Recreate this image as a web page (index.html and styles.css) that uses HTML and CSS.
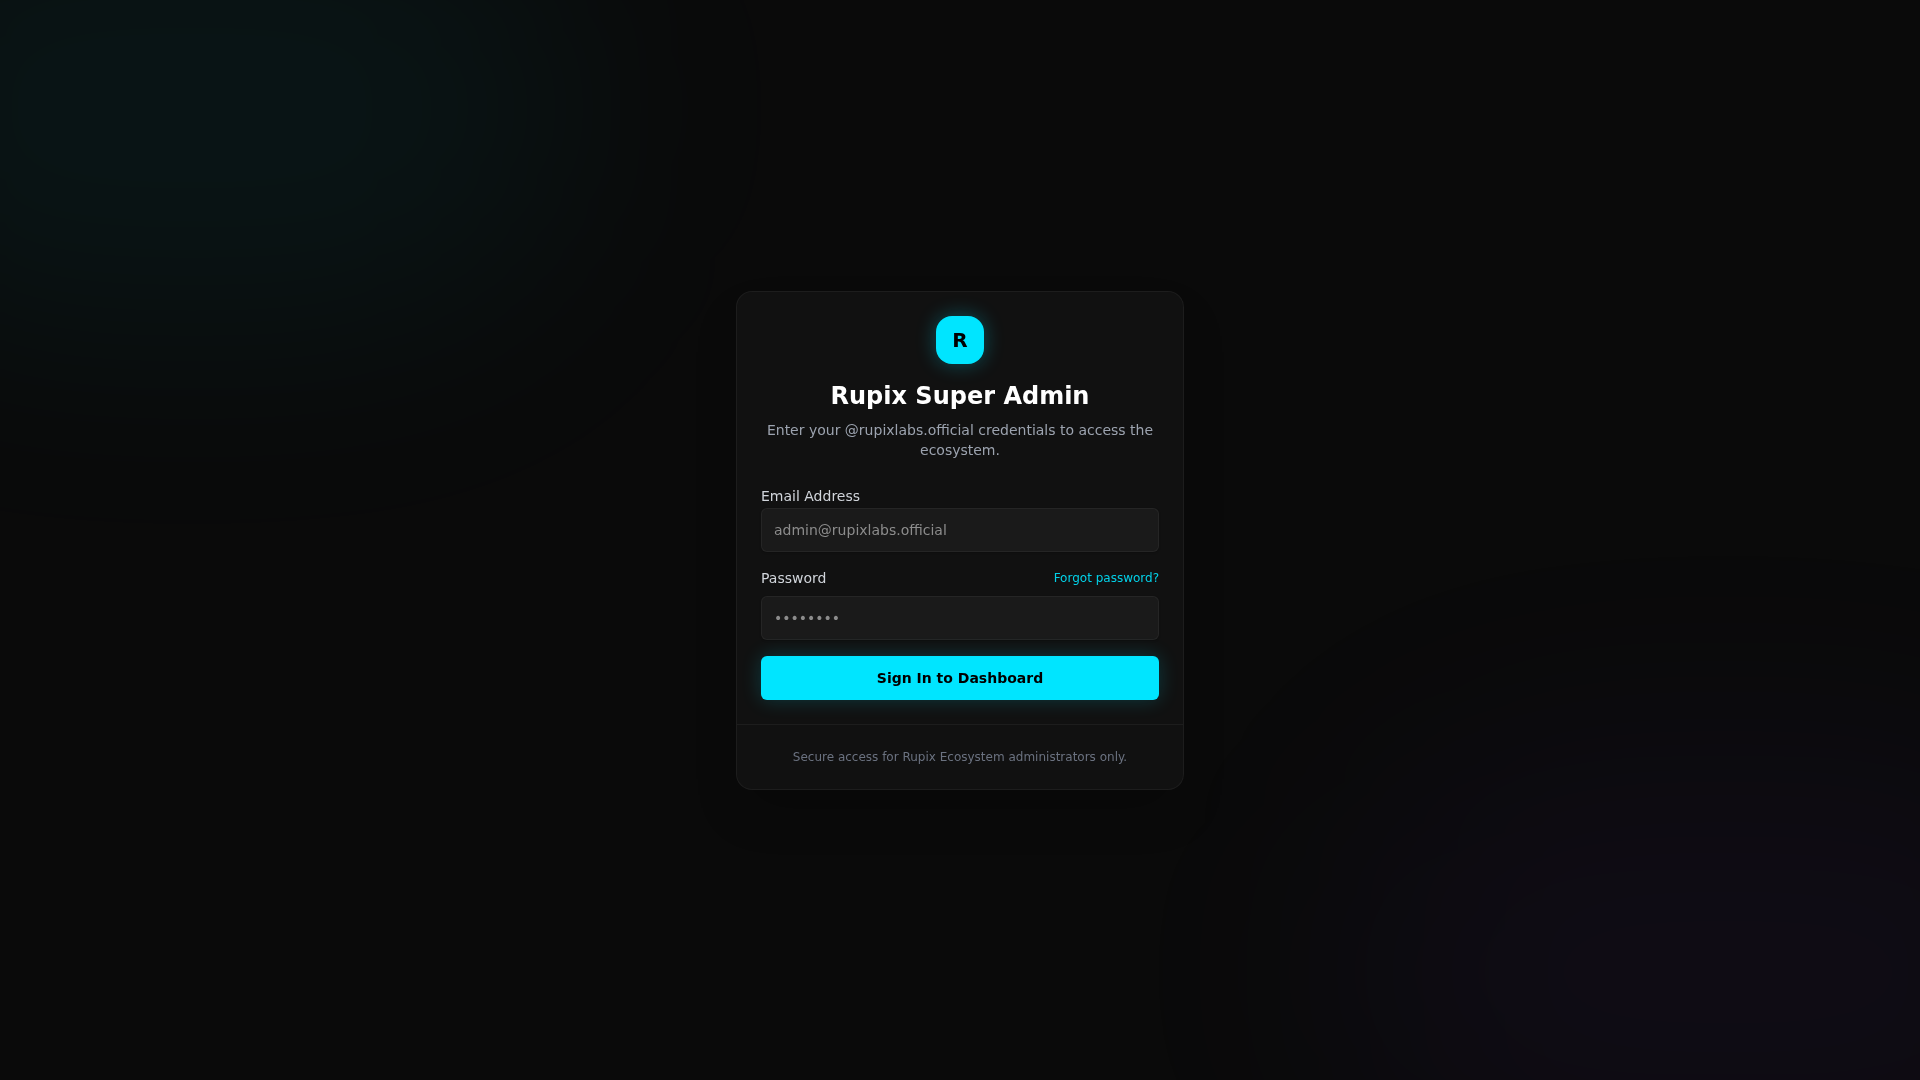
FILE: index.html
```html
<!DOCTYPE html>
<html lang="en">
<head>
<meta charset="UTF-8">
<meta name="viewport" content="width=device-width, initial-scale=1.0">
<title>Rupix Super Admin</title>
<link rel="stylesheet" href="styles.css">
</head>
<body>
    <div class="glow glow-cyan"></div>
    <div class="glow glow-purple"></div>

    <main class="card">
        <div class="card-header">
            <div class="logo">R</div>
            <h1>Rupix Super Admin</h1>
            <p>Enter your @rupixlabs.official credentials to access the ecosystem.</p>
        </div>

        <form class="login-form">
            <div class="field">
                <label class="email-label" for="email">Email Address</label>
                <input type="email" id="email" placeholder="admin@rupixlabs.official">
            </div>
            <div class="field">
                <div class="label-row">
                    <label for="password">Password</label>
                    <a href="#">Forgot password?</a>
                </div>
                <input type="password" id="password" placeholder="••••••••">
            </div>
            <button class="btn" type="submit">Sign In to Dashboard</button>
        </form>

        <div class="card-footer">Secure access for Rupix Ecosystem administrators only.</div>
    </main>
</body>
</html>
```

FILE: styles.css
```css
* {
    box-sizing: border-box;
}
body {
    margin: 0;
    min-height: 100vh;
    display: flex;
    align-items: center;
    justify-content: center;
    position: relative;
    overflow: hidden;
    background-color: #0a0a0a;
    color: #ffffff;
    font-family: "DejaVu Sans", sans-serif;
    font-size: 14px;
    line-height: 20px;
}

/* background glows */
.glow {
    position: fixed;
    width: 40%;
    height: 40%;
    border-radius: 9999px;
    filter: blur(120px);
    pointer-events: none;
}
.glow-cyan {
    top: -10%;
    left: -10%;
    background-color: rgba(0, 229, 255, 0.05);
}
.glow-purple {
    bottom: -10%;
    right: -10%;
    background-color: rgba(124, 58, 237, 0.05);
}

.card {
    position: relative;
    width: 100%;
    max-width: 448px;
    background-color: #111111;
    border: 1px solid rgba(255, 255, 255, 0.05);
    border-radius: 16px;
    box-shadow: 0 25px 50px -12px rgba(0, 0, 0, 0.25);
}
.card-header {
    padding: 24px;
    text-align: center;
}
.logo {
    display: flex;
    align-items: center;
    justify-content: center;
    width: 48px;
    height: 48px;
    margin: 0 auto 16px;
    border-radius: 16px;
    background-color: #00e5ff;
    box-shadow: 0 0 20px rgba(0, 229, 255, 0.3);
    color: #000000;
    font-size: 20px;
    font-weight: bold;
}
h1 {
    margin: 0 0 8px;
    font-size: 24px;
    line-height: 32px;
}
.card-header p {
    margin: 0;
    color: #9ca3af;
}

.login-form {
    display: flex;
    flex-direction: column;
    gap: 16px;
    padding: 0 24px 24px;
}
label {
    color: #d1d5db;
}
.email-label {
    display: block;
    line-height: 24px;
}
.label-row {
    display: flex;
    align-items: center;
    justify-content: space-between;
    margin-bottom: 8px;
}
.label-row a {
    color: rgba(0, 229, 255, 0.9);
    font-size: 12px;
    text-decoration: none;
}
.label-row a:hover {
    text-decoration: underline;
}
input {
    display: block;
    width: 100%;
    height: 44px;
    padding: 4px 12px;
    background-color: #1a1a1a;
    border: 1px solid rgba(255, 255, 255, 0.05);
    border-radius: 6px;
    box-shadow: 0 1px 2px rgba(0, 0, 0, 0.2);
    color: #ffffff;
    font-family: inherit;
    font-size: 14px;
}
input::placeholder {
    color: #8c8c8c;
}
.btn {
    height: 44px;
    background-color: #00e5ff;
    border: none;
    border-radius: 6px;
    box-shadow: 0 0 20px rgba(0, 229, 255, 0.2);
    color: #000000;
    cursor: pointer;
    font-family: inherit;
    font-size: 14px;
    font-weight: bold;
}
.btn:hover {
    background-color: #00cce6;
}

.card-footer {
    padding: 24px;
    border-top: 1px solid rgba(255, 255, 255, 0.05);
    color: #6b7280;
    font-size: 12px;
    line-height: 16px;
    text-align: center;
}
```
